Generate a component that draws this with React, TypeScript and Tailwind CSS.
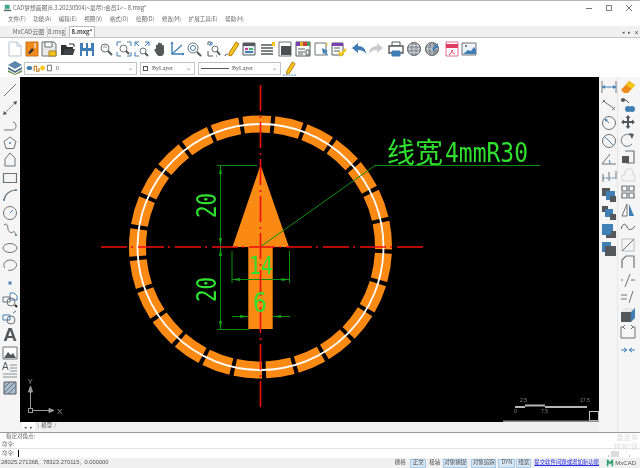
import React from 'react';

const cjk = "font-['Noto_Sans_CJK_SC','Liberation_Sans',sans-serif]";

const G = '#6f7275';
const B = '#3f7fb5';
const O = '#f08a1c';
const Y = '#f5c518';
const D = '#55585b';

const Icon: React.FC<{ children: React.ReactNode; className?: string }> = ({ children, className }) => (
  <svg viewBox="0 0 16 16" className={className ?? 'w-4 h-4 shrink-0'} fill="none" stroke={G} strokeWidth={1}>
    {children}
  </svg>
);

const magnifier = (
  <>
    <circle cx="7" cy="7" r="4" />
    <path d="M10 10l4 4" strokeWidth={2} stroke={D} />
  </>
);

// top toolbar, x is where each icon starts
const topIcons: { x: number; node: React.ReactNode }[] = [
  { x: 7, node: <path d="M2 1h8l4 4v10H2z M10 1v4h4" stroke="#b9c3cc" fill="#fff" /> },
  { x: 24, node: <><path d="M2 1h12v14H2z" fill={O} stroke="#c8701a" /><path d="M4 12l4-5 2 2-4 4z" fill="#333" stroke="none" /><path d="M11 2v5" stroke="#fff" /></> },
  { x: 41, node: <><path d="M1 1h12l2 2v12H1z" fill="#e9e9e9" stroke={G} /><path d="M4 1h7v5H4z" fill="#fff" stroke={G} /><path d="M8 10h7v5H8z" fill={Y} stroke="#a5822a" /></> },
  { x: 60, node: <><path d="M1 4h5l1 2h6v8H1z" fill="#2e3032" stroke="none" /><path d="M3 14l2-6h10l-2 6z" fill="#3f4246" stroke="none" /><path d="M9 3h5v3" stroke="#2e3032" /></> },
  { x: 79, node: <><path d="M1 2h14v13H1z" fill={B} stroke="none" /><path d="M4 2h3v5H4zM9 2h3v5H9z" fill="#fff" stroke="none" /><path d="M3 10h4v5H3zM9 10h4v5H9z" fill="#fff" stroke="none" /></> },
  { x: 98, node: <>{magnifier}<path d="M5 6h4M7 4v1" stroke="#999" /></> },
  { x: 116, node: <><path d="M1 5V1h4M11 1h4v4M15 11v4h-4M5 15H1v-4" stroke={B} /><circle cx="7.5" cy="7.5" r="3.5" /><path d="M10 10l3 3" stroke={D} strokeWidth={2} /></> },
  { x: 134, node: <><path d="M1 5V1h4M1 1l4 4M15 5V1h-4M15 1l-4 4M1 11v4h4" stroke={B} /><circle cx="9" cy="10" r="3" /><path d="M11 12l3 3" stroke={D} strokeWidth={2} /></> },
  { x: 152, node: <path d="M4 8V4.5a1 1 0 012 0V7V2.5a1 1 0 012 0V7V3a1 1 0 012 0v5V5a1 1 0 012 0v6c0 2-1 4-3 4H7c-1 0-2-1-3-3L2.500 9.500C2 8 3.500 7.500 4 8z" fill="#55585b" stroke="none" /> },
  { x: 169, node: <><path d="M3 1v12h12" stroke={B} strokeWidth={1.4} /><path d="M3 13L13 4" stroke={B} strokeWidth={1.2} /><path d="M2 3l1-2 1 2M13 12l2 1-2 1" stroke={B} /></> },
  { x: 186, node: <><circle cx="7" cy="7" r="5" /><circle cx="7" cy="7" r="2.500" stroke={B} /><path d="M11 11l4 4" strokeWidth={2} stroke={D} /></> },
  { x: 206, node: <><path d="M5 1H2v3M2 10v5h5M10 15h1" stroke={D} /><path d="M3 4l3-3M6 1v3H3" stroke={B} /><circle cx="9" cy="8" r="3" /><path d="M11 10l3 4" strokeWidth={2} stroke={D} /></> },
  { x: 224, node: <><path d="M1 15c1-3 3-2 2-1" stroke="#444" /><path d="M5 12L12 1l3 2-7 11-3 1z" fill={Y} stroke="#b97a12" /></> },
  { x: 241, node: <><path d="M2 2h12v12H2z" fill="#e8eef3" stroke={D} /><path d="M2 2h12v3H2z" fill={D} stroke="none" /><path d="M4 7h3v2H4z" fill="#d23a8f" stroke="none" /><path d="M8 7h4v2H8z" fill="#3fb36a" stroke="none" /><path d="M4 10h8v2H4z" fill={B} stroke="none" /></> },
  { x: 260, node: <><path d="M1 4h11M1 7h12M1 10h12M1 13h12" stroke={D} strokeWidth={1.5} /><path d="M12 1h3v4h-3z" fill={Y} stroke="none" /></> },
  { x: 277, node: <><path d="M2 1h12v14H2z" fill="#fff" stroke={G} /><path d="M4 5h10v9H4z" fill="#4d5053" stroke="none" /></> },
  { x: 295, node: <><path d="M1 1h14v14H1z" fill="#fff" stroke={D} /><path d="M1 1h4v4H1z" fill="#7a3fb5" stroke="none" /><path d="M5 1h3v4H5z" fill="#d9b21c" stroke="none" /><path d="M8 1h4v4H8z" fill="#d23a3a" stroke="none" /><path d="M12 1h3v4h-3z" fill="#3fa05a" stroke="none" /><path d="M3 8h7M3 11h7M3 13h5" stroke={D} /><path d="M11 9h3v5h-3z" stroke={D} /></> },
  { x: 314, node: <><path d="M1 2h11v12H1z" fill="#fff" stroke={G} /><path d="M8 7l6 3-2 1 2 3-1 1-2-3-2 1z" fill={B} stroke="none" /><path d="M12 2l2 1-1 2z" fill={Y} stroke="none" /></> },
  { x: 331, node: <><path d="M1 2h11v12H1z" fill="#fff" stroke={D} /><path d="M1 2h11v3H1z" fill="#7a3fb5" stroke="none" /><path d="M3 7h6M3 10h6" stroke={D} /><path d="M8 11l2 3 5-6" stroke={Y} strokeWidth={2.4} /></> },
  { x: 351, node: <path d="M1 7l6-5v3c5 0 8 3 8 8-2-3-4-4-8-4v3z" fill={B} stroke="none" /> },
  { x: 368, node: <path d="M15 7L9 2v3C4 5 1 8 1 13c2-3 4-4 8-4v3z" fill="#c9ccd0" stroke="none" /> },
  { x: 388, node: <><path d="M4 1h8v4H4z" stroke={D} fill="#fff" /><path d="M1 5h14v7H1z" stroke={D} fill="#fff" strokeWidth={1.4} /><path d="M4 10h8v5H4z" fill={B} stroke={B} /></> },
  { x: 406, node: <><circle cx="8" cy="8" r="6.500" fill="#8a9299" stroke={D} /><path d="M1.500 8h13M8 1.500v13M3 4.500h10M3 11.500h10M5 2.500c-2 3-2 8 0 11M11 2.500c2 3 2 8 0 11" stroke="#e4e6e8" strokeWidth={0.7} /></> },
  { x: 424, node: <><circle cx="8" cy="8" r="6.500" fill="#8a9299" stroke={D} /><path d="M1.500 8h13M8 1.500v13M5 2.500c-2 3-2 8 0 11" stroke="#e4e6e8" strokeWidth={0.7} /><path d="M8 8l6-6v5h-2l-2 3z" fill={B} stroke="none" /></> },
  { x: 444, node: <><path d="M2 1h12v14H2z" fill="#fff" stroke="#e0708f" /><path d="M2 3h12v4H2z" fill="#e23a62" stroke="none" /><path d="M5 14c2-1 3-3 3-5 0 2 1 3 3 4" stroke="#e23a62" /></> },
  { x: 461, node: <><path d="M1 2h14v12H1z" fill="#eef3f7" stroke={G} /><path d="M2 13l5-4 3 1 3-4 2 3v4z" fill={B} stroke="none" /><circle cx="5" cy="5" r="1" fill={D} stroke="none" /></> },
];

const leftIcons: React.ReactNode[] = [
  <path d="M2 14L14 2" />,
  <><path d="M3 13L13 3" strokeDasharray="2 1" /><path d="M1 15l1-4 3 3zM15 1l-1 4-3-3z" fill={D} stroke="none" /></>,
  <path d="M2 13h7c4 0 5-2 5-4s-1-4-3-4" />,
  <><path d="M8 2l6 4.500-2 7H4l-2-7z" /><circle cx="8" cy="8" r="1" fill={B} stroke="none" /></>,
  <path d="M8 1l5 5v8H3V7z" />,
  <path d="M1.500 3.500h13v9h-13z" strokeWidth={1.2} />,
  <><path d="M2 13C3 7 8 3 14 3" strokeWidth={1.2} /><circle cx="2" cy="13" r="1" fill={B} stroke="none" /><circle cx="14" cy="3" r="1" fill={B} stroke="none" /></>,
  <><circle cx="8" cy="8" r="6.500" /><path d="M8 8l3-3" stroke={B} /></>,
  <><path d="M2 3c3-3 4 2 4 4s3 5 5 3 2 3 3 3" /><circle cx="14" cy="13" r="1" fill={B} stroke="none" /></>,
  <ellipse cx="8" cy="8" rx="7" ry="4.500" />,
  <path d="M3 11C0 8 3 3 8 3s8 4 6 7-6 4-8 3" />,
  <path d="M6.500 6.500h3v3h-3z" fill="#4a7fb0" stroke="none" />,
  <><path d="M8 1h4l3 3v4h-7z" stroke={B} fill="#fff" /><path d="M1 5h7v5H1z" /><circle cx="9" cy="10" r="4" /><path d="M13 13l2 2" stroke="#222" strokeWidth={2} /></>,
  <><path d="M1 5h7v5H1z" stroke={B} /><circle cx="9" cy="10" r="4" /><path d="M11 3l3-2" stroke={B} /></>,
];

const rightCol1: React.ReactNode[] = [
  <><path d="M1 2v12M15 2v12" /><path d="M1 8h14" stroke={B} /><path d="M1 8l3-2v4zM15 8l-3-2v4z" fill={B} stroke="none" /></>,
  <path d="M2 3l3 3 6 4 3 3M1 6l3-3M11 13l3-3" />,
  <><circle cx="8" cy="8" r="6.500" /><path d="M8 8L4 4" stroke={B} /><path d="M4 4l2.500 1M4 4l1 2.500" stroke={B} /></>,
  <><circle cx="8" cy="8" r="6.500" /><path d="M3.500 3.500l9 9" stroke={B} /></>,
  <><path d="M1 13h14M1 13L9 3" /><path d="M8 9c1 1 1 3 1 4" stroke={B} /></>,
  <><path d="M2 5v8M8 3v9M15 2v8" /><path d="M2 9h13" stroke={B} strokeDasharray="2 1" /></>,
  <><path d="M1 1h8v8H1z" fill={D} stroke="none" /><path d="M5 4h9v9H5z" fill={B} stroke="none" /><path d="M9 9h6v6H9z" fill={D} stroke="none" /></>,
  <><path d="M1 1h6v6H1z" fill={D} stroke="none" /><path d="M4 4h8v8H4z" fill={B} stroke="none" /><path d="M9 9h6v6H9z" fill={D} stroke="none" /></>,
  <><path d="M1 1h11v11H1z" fill={B} stroke="none" /><path d="M10 8h5v7H5v-3h5z" fill={D} stroke="none" /></>,
  <><path d="M1 1h9v4H1zM1 1h4v10H1z" fill={B} stroke="none" /><path d="M4 5h11v10H4z" fill={D} stroke="none" /></>,
];

const rightCol2: React.ReactNode[] = [
  <><path d="M1 11l8-9 6 4-7 8H4z" fill={O} stroke="none" /><path d="M9 2l6 4-3 4-6-4z" fill={Y} stroke="none" /></>,
  <><path d="M1 3h5l3 3" stroke={D} /><circle cx="3" cy="3" r="2" fill={D} stroke="none" /><circle cx="8" cy="12" r="3" fill={B} stroke="none" /><circle cx="12" cy="12" r="3" fill={B} stroke="none" /></>,
  <path d="M8 1l2.500 3H9v3h3V5.500L15 8l-3 2.500V9H9v3h1.500L8 15l-2.500-3H7V9H4v1.500L1 8l3-2.500V7h3V4H5.500z" fill={D} stroke="none" />,
  <><path d="M12 12a6 6 0 11-2-9" /><path d="M9 1l5 1-2 5z" fill={D} stroke="none" /></>,
  <><path d="M5 2h9v12H6" strokeWidth={1.2} /><path d="M2 7h7v7H2z" fill={D} stroke="none" /></>,
  <path d="M2 14V8h3V4l3-2h4l1 3v3h2v6z" stroke="#d4d6d8" />,
  <path d="M2 2h5v5H2zM9 2h5v5H9zM2 9h5v5H2zM9 9h5v5H9z" strokeWidth={1.2} />,
  <><path d="M7 2L2 14h5z" fill="#fff" /><path d="M9 2l5 12H9z" fill={B} stroke="none" /></>,
  <path d="M1 10c2-6 4-6 6-2s5 3 8-1" stroke={D} />,
  <><path d="M2 2h12v12H2z" stroke="#b9bcbf" /><path d="M2 14L14 2" /></>,
  <path d="M2 14V6l4-4h8v12" strokeWidth={1.2} />,
  <path d="M5 15L10 2M1 8h2M11 8h4" />,
  <path d="M1 6h6M1 10h6M9 14l4-12" />,
  <><path d="M1 5h10v10H1z" fill={D} stroke="none" /><path d="M1 5l4-4h10L11 5z" fill="#e8e8e8" stroke="none" /><path d="M11 5l4-4v10l-4 4z" fill={B} stroke="none" /></>,
  <path d="M4 3H1v11h14V3h-3M5 1L3 3l2 2M11 1l2 2-2 2" />,
  <path d="M1 8h5M10 8h5M4 6l3 2-3 2M12 6L9 8l3 2" stroke={B} />,
];

const lowerLeftIcons = (
  <>
    <div className="w-4 h-4 shrink-0 flex items-center justify-center font-['Liberation_Sans',sans-serif] font-bold text-[19px] leading-4 text-[#55585b]">A</div>
    <Icon><path d="M1 2h14v12H1z" fill="#fff" stroke={G} /><path d="M2 13l4-6 3 3 2-2 3 5z" fill={D} stroke="none" /></Icon>
    <div className="w-4 h-4 shrink-0 flex items-start relative font-['Liberation_Sans',sans-serif] text-[10px] leading-[10px] text-[#55585b]">
      A
      <svg viewBox="0 0 16 16" className="absolute inset-0 w-4 h-4" fill="none" stroke="#8c8f92"><path d="M8 3h7M8 6h7M8 9h7M1 12h14M1 15h14" /></svg>
    </div>
    <Icon><path d="M2 2h12v12H2z" stroke={D} fill="#a9bdd2" /><path d="M2 8l6-6M2 13L13 2M6 14l8-8" stroke="#6b6f73" /></Icon>
  </>
);

// red centre line, run from the far end as the drawing has it
const centre = { stroke: '#f20d0d', strokeWidth: 1.6, strokeDasharray: '26 5 2 4' };

const DimArrow: React.FC<{ x: number; y: number; dir: 'u' | 'd' | 'l' | 'r' }> = ({ x, y, dir }) => {
  const pts = {
    u: `${x},${y} ${x - 1.5},${y + 8} ${x + 1.5},${y + 8}`,
    d: `${x},${y} ${x - 1.5},${y - 8} ${x + 1.5},${y - 8}`,
    l: `${x},${y} ${x + 8},${y - 1.5} ${x + 8},${y + 1.5}`,
    r: `${x},${y} ${x - 8},${y - 1.5} ${x - 8},${y + 1.5}`,
  }[dir];
  return <polygon points={pts} fill="#16a316" />;
};

const Drawing = () => (
  <svg viewBox="20 77 579 345" className="block w-full h-full bg-black">
    {/* ring */}
    <circle cx="260.5" cy="247" r="123" fill="none" stroke="#fb8a14" strokeWidth="17" strokeDasharray="26.9 4" strokeDashoffset="-6.3" />
    <circle cx="260.5" cy="247" r="123" fill="none" stroke="#fff" strokeWidth="1.8" />

    {/* arrow */}
    <polygon points="260.5,165 289,247 232.5,247" fill="#fb8a14" />
    <rect x="248.3" y="247" width="24.400" height="82" fill="#fb8a14" />

    {/* dimensions */}
    <g stroke="#0f8f0f" strokeWidth="1" fill="none">
      <path d="M217 165.500H257M217 329.500H249M220.500 165V329" />
      <path d="M232 251V283M289.500 251V283M232 279.500H289.500" />
      <path d="M232 316.500H248M273 316.500H290" />
      <path d="M260 247L375 165.500H540" />
    </g>
    <DimArrow x={220.5} y={166} dir="u" />
    <DimArrow x={220.5} y={246} dir="d" />
    <DimArrow x={220.5} y={248} dir="u" />
    <DimArrow x={220.5} y={329} dir="d" />
    <DimArrow x={232} y={279.5} dir="l" />
    <DimArrow x={289.5} y={279.5} dir="r" />
    <DimArrow x={248} y={316.5} dir="r" />
    <DimArrow x={273} y={316.5} dir="l" />

    {/* centre lines */}
    <path d="M423 247H100" fill="none" {...centre} />
    <path d="M260.5 85V408" fill="none" {...centre} />

    {/* labels */}
    <g fill="#2fe02f" fontFamily="DejaVu Sans Mono">
      <text x="0" y="0" fontSize="27" textLength="25" lengthAdjust="spacingAndGlyphs" transform="translate(216 218) rotate(-90)">20</text>
      <text x="0" y="0" fontSize="27" textLength="25" lengthAdjust="spacingAndGlyphs" transform="translate(216 302) rotate(-90)">20</text>
      <text x="249" y="274" fontSize="24" textLength="24" lengthAdjust="spacingAndGlyphs">14</text>
      <text x="253" y="312" fontSize="27" textLength="14" lengthAdjust="spacingAndGlyphs">6</text>
      <text x="387" y="163" fontSize="28" fontFamily="Noto Sans CJK SC">线宽</text>
      <text x="445" y="162" fontSize="27" textLength="83" lengthAdjust="spacingAndGlyphs">4mmR30</text>
    </g>

    {/* ucs icon */}
    <g stroke="#9a9a9a" strokeWidth="1" fill="none">
      <rect x="28.500" y="408.500" width="4" height="4" />
      <path d="M30.500 408V390M33 410.500H50" />
      <path d="M30.500 386l-2 6h4zM54 410.500l-5-2v4z" fill="#9a9a9a" />
    </g>
    <g fill="#9a9a9a" fontSize="8" fontFamily="Liberation Sans">
      <text x="27.500" y="384">Y</text>
      <text x="57" y="414">X</text>
    </g>

    {/* scale bar and viewport corner */}
    <path d="M515 407H525M525 405.500H545M545 407H587" stroke="#b5b5b5" strokeWidth="2" fill="none" />
    <g fill="#8a8a8a" fontSize="5" fontFamily="Liberation Sans">
      <text x="520" y="402">2.5</text>
      <text x="580" y="402">17.5</text>
      <text x="514" y="413">0</text>
      <text x="541" y="413">7.5</text>
    </g>
    <rect x="589.500" y="411.500" width="9" height="9" fill="none" stroke="#c8c8c8" />
    <rect x="503" y="420.500" width="96" height="1.500" fill="#8d8d8d" />
  </svg>
);

const menus = ['文件(F)', '功能(A)', '编辑(E)', '视图(V)', '格式(O)', '绘图(D)', '修改(M)', '扩展工具(E)', '帮助(H)'];

const statusItems = [
  { label: '栅格', on: false, cls: 'w-[12px]' },
  { label: '正交', on: true, cls: 'w-[16px] ml-[4px]' },
  { label: '极轴', on: false, cls: 'w-[13px] ml-[2px]' },
  { label: '对象捕捉', on: true, cls: 'w-[24px] ml-[2px]' },
  { label: '对象追踪', on: true, cls: 'w-[25px] ml-[4px]' },
  { label: 'DYN', on: true, cls: 'w-[17px] ml-[2px]' },
  { label: '线宽', on: true, cls: 'w-[15px] ml-[1px]' },
];

export default function App() {
  return (
    <div className={`w-[640px] h-[468px] flex flex-col overflow-hidden bg-[#f3f3f3] text-[#555] border-t border-[#b5b5b5] blur-[0.35px] ${cjk}`}>
      {/* Title bar */}
      <div className="h-[13px] shrink-0 flex items-center bg-white pl-1">
        <svg viewBox="0 0 10 10" className="w-[8px] h-[8px]">
          <path d="M1 1h6v5H1z" fill="#3ba58c" />
          <path d="M0 7h9v2H0z" fill="#5d6f78" />
        </svg>
        <span className="ml-[1px] text-[5.800px] leading-none text-[#666]">CAD梦想画图(6.3.20230504)&lt;最尽!:会员1&gt; - 8.mxg*</span>
        <div className="ml-auto flex items-center gap-[12px] pr-[7px] text-[#777]">
          <svg viewBox="0 0 8 8" className="w-2 h-2" stroke="currentColor" fill="none"><path d="M1 4.500h6" /></svg>
          <svg viewBox="0 0 8 8" className="w-2 h-2" stroke="currentColor" fill="none"><path d="M1.500 1.500h5v5h-5z" /></svg>
          <svg viewBox="0 0 8 8" className="w-2 h-2" stroke="currentColor" fill="none"><path d="M1 1l6 6M7 1L1 7" /></svg>
        </div>
      </div>

      {/* Menu */}
      <div className="h-[12px] shrink-0 flex items-center gap-[7.500px] bg-white pl-[8px] text-[5.500px] leading-none text-[#666]">
        {menus.map((m) => (
          <span key={m}>{m}</span>
        ))}
      </div>

      {/* Document tabs */}
      <div className="h-[12px] shrink-0 flex items-end bg-[#f0f0f0] pl-[11px] border-b border-[#c4c4c4] text-[6px] leading-none">
        <span className="w-[35px] h-[10px] flex items-center justify-center whitespace-nowrap text-[#666]">MxCAD云图</span>
        <span className="ml-[1px] w-[19px] h-[10px] flex items-center justify-center text-[#666] border-x border-[#d0d0d0]">8.mxg</span>
        <span className="ml-[3px] w-[26px] h-[11px] flex items-center justify-center bg-white text-[#444] font-bold border-x border-t border-[#bbb]">8.mxg*</span>
        <div className="ml-auto pr-[1px] self-center flex gap-[3px] text-[5px] text-[#555]">
          <span>◂</span>
          <span>▸</span>
          <span className="font-bold">×</span>
        </div>
      </div>

      {/* Toolbar 1 */}
      <div className="h-[21px] shrink-0 flex items-center bg-white">
        {topIcons.map((it, i) => (
          <div key={i} className="shrink-0 w-4 h-4" style={{ marginLeft: it.x - (i === 0 ? 0 : topIcons[i - 1].x + 16) }}>
            <Icon>{it.node}</Icon>
          </div>
        ))}
      </div>

      {/* Toolbar 2: layer and linetype */}
      <div className="h-[18px] shrink-0 flex items-center bg-white pl-[7px] text-[6px] leading-none text-[#555] font-['Liberation_Serif',serif]">
        <Icon>
          <path d="M8 1l7 4-7 4-7-4z" fill="#5b87ad" stroke="none" />
          <path d="M1 7l7 4 7-4v2l-7 4-7-4z" fill="#4b6c86" stroke="none" />
          <path d="M1 10l7 4 7-4v2l-7 3-7-3z" fill="#6f8f52" stroke="none" />
        </Icon>
        <div className="ml-[1px] w-[113px] h-[13px] flex items-center gap-[1px] pl-[1px] border border-[#c2c2c2]">
          <svg viewBox="0 0 32 10" className="w-[26px] h-[8px]">
            <ellipse cx="4" cy="5" rx="3.500" ry="2.500" fill="#3f7fb5" />
            <path d="M10 9V3h3v6h3V5" stroke="#c8842a" strokeWidth="1.500" fill="none" />
            <circle cx="20.500" cy="5" r="3" fill="#f5c518" />
            <path d="M26.500 1.500h5v7h-5z" stroke="#555" fill="#fff" />
          </svg>
          <span className="ml-[3px]">0</span>
          <span className="ml-auto mr-[3px] text-[6px] text-[#777]">⌄</span>
        </div>
        <div className="ml-[3px] w-[55px] h-[13px] flex items-center pl-[2px] border border-[#c2c2c2]">
          <span className="w-[5px] h-[5px] border border-[#555]" />
          <span className="ml-[4px]">ByLayer</span>
          <span className="ml-auto mr-[3px] text-[#777]">⌄</span>
        </div>
        <div className="ml-[3px] w-[83px] h-[13px] flex items-center pl-[2px] border border-[#c2c2c2]">
          <span className="w-[28px] h-px bg-[#555]" />
          <span className="ml-[3px]">ByLayer</span>
          <span className="ml-auto mr-[3px] text-[#777]">⌄</span>
        </div>
        <Icon className="ml-[1px] w-[15px] h-[15px] shrink-0">
          <path d="M5 11L11 1l3 2-6 10-3 1z" fill="#f5c518" stroke="#b97a12" />
          <path d="M1 15h14" stroke="#3f7fb5" strokeDasharray="2 1" />
        </Icon>
      </div>

      {/* Work area */}
      <div className="flex-1 min-h-0 flex">
        <div className="w-[20px] shrink-0 flex flex-col items-center gap-[1.500px] pt-[5px] bg-[#f5f5f5]">
          {leftIcons.map((node, i) => (
            <Icon key={i}>{node}</Icon>
          ))}
          {lowerLeftIcons}
        </div>

        <div className="w-[579px] shrink-0 flex flex-col">
          <div className="h-[345px] shrink-0">
            <Drawing />
          </div>
          <div className="flex-1 flex items-start bg-[#f0f0f0] pl-[2px] text-[5.500px] leading-none text-[#555]">
            <span className="w-[6.500px] h-[8px] flex items-center justify-center bg-white text-[5px]">◂</span>
            <span className="w-[6.500px] h-[8px] flex items-center justify-center bg-white text-[5px]">▸</span>
            <span className="h-[8px] ml-[2px] flex items-center gap-[2px] whitespace-nowrap">
              <span className="text-[#888]">\</span>
              模型
              <span className="text-[#888]">/</span>
            </span>
          </div>
        </div>

        <div className="flex-1 flex pl-[2px] bg-[#f5f5f5]">
          <div className="w-[17px] flex flex-col gap-[2px] pt-[2px] border-r border-[#e6e6e6]">
            {rightCol1.map((node, i) => (
              <Icon key={i}>{node}</Icon>
            ))}
          </div>
          <div className="w-4 ml-[2px] flex flex-col gap-[1.500px] pt-[2px]">
            {rightCol2.map((node, i) => (
              <Icon key={i}>{node}</Icon>
            ))}
          </div>
        </div>
      </div>

      {/* Command lines */}
      <div className="h-[26px] shrink-0 flex flex-col bg-white border-t border-[#9a9a9a] text-[5.500px] leading-none text-[#666] relative">
        <div className="h-[8px] pl-[6px] flex items-center">指定对角点:</div>
        <div className="h-[8px] pl-[2px] flex items-center border-b border-[#e4e4e4]">命令:</div>
        <div className="h-[9px] pl-[2px] flex items-center">
          命令:
          <span className="ml-[3px] w-px h-[7px] bg-black" />
        </div>
        <div className="absolute right-[2px] top-[1px] text-[7px] text-[#d8d8d8]">激活 W</div>
        <div className="absolute right-[2px] top-[10px] text-[7px] text-[#dedede]">转到"设</div>
        <div className="absolute right-[10px] bottom-[1px] flex items-center gap-[2px] text-[5px] text-[#555]">
          <span>‹</span>
          <span className="w-[8px] h-[6px] bg-[#dcdcdc]" />
          <span className="ml-[7px]">›</span>
        </div>
      </div>

      {/* Status bar */}
      <div className="h-[10px] shrink-0 flex items-center bg-[#f0f0f0] pl-[1px] text-[5.800px] leading-none text-[#555]">
        <span className="font-['Liberation_Sans',sans-serif]">28025.271368,&nbsp; 78323.270115,&nbsp; 0.000000</span>
        <div className="ml-auto flex items-center pr-[4px]">
          {statusItems.map((s) => (
            <span
              key={s.label}
              className={`${s.cls} h-[9px] flex items-center justify-center whitespace-nowrap text-[5.500px] ${s.on ? 'bg-[#d5e6f5] border border-[#a9cbe6]' : ''}`}
            >
              {s.label}
            </span>
          ))}
          <span className="ml-[3px] w-[66px] whitespace-nowrap text-[5.400px] text-[#2a2ae0] underline">提交软件问题或增加新功能</span>
          <svg viewBox="0 0 10 10" className="ml-[6px] w-[8px] h-[8px]" fill="#2f9e6f">
            <path d="M1 9V1h2l2 3 2-3h2v8H7V5L5 7 3 5v4z" />
          </svg>
          <span className="ml-[1px] text-[6px] text-[#555] font-['Liberation_Sans',sans-serif]">MxCAD</span>
        </div>
      </div>
    </div>
  );
}
